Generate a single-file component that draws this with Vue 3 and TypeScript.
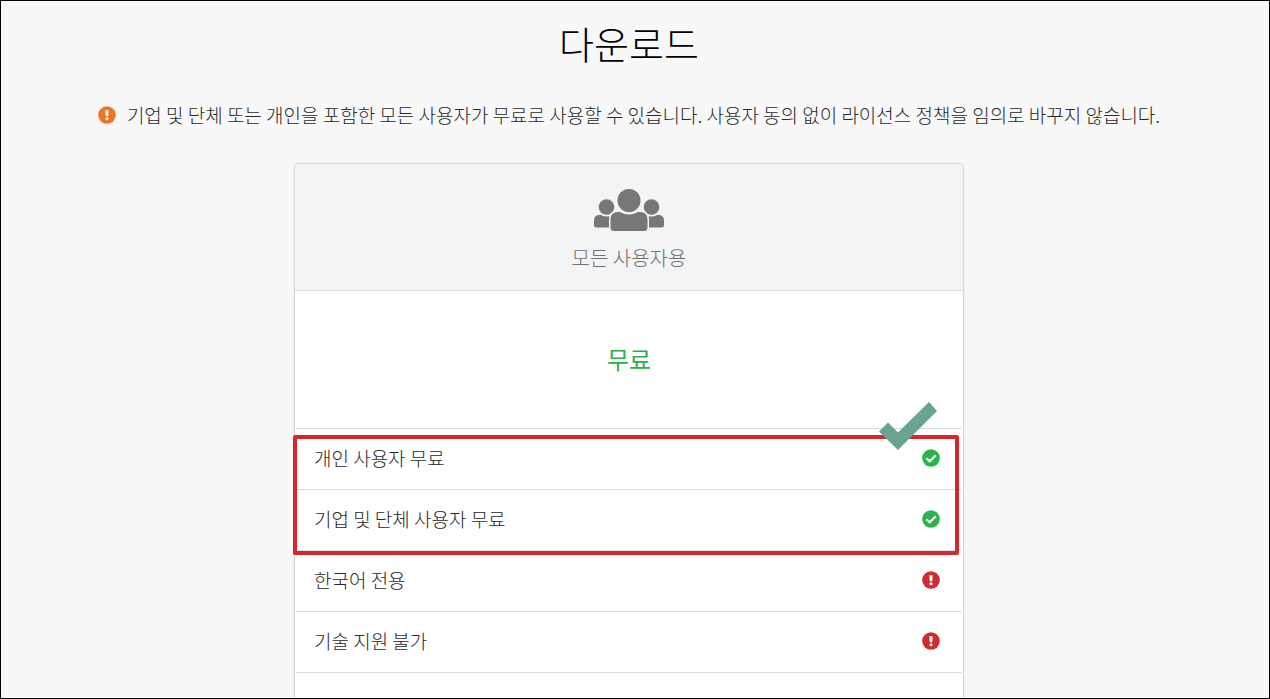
<script setup lang="ts">
interface Feature {
  label: string
  ok: boolean
}

const highlighted: Feature[] = [
  { label: '개인 사용자 무료', ok: true },
  { label: '기업 및 단체 사용자 무료', ok: true },
]
const others: Feature[] = [
  { label: '한국어 전용', ok: false },
  { label: '기술 지원 불가', ok: false },
]
const groups = [
  { marked: true, items: highlighted },
  { marked: false, items: others },
]
</script>

<template>
  <main class="page">
    <h1 class="title">다운로드</h1>
    <p class="notice">
      <svg class="badge orange" viewBox="0 0 18 18" aria-hidden="true">
        <circle cx="9" cy="9" r="8.8" fill="currentColor" />
        <path d="M7.3 4.2h3.4l-.5 6H7.8z" fill="#fff" />
        <circle cx="9" cy="12.8" r="1.5" fill="#fff" />
      </svg>
      <span>기업 및 단체 또는 개인을 포함한 모든 사용자가 무료로 사용할 수 있습니다. 사용자 동의 없이 라이선스 정책을 임의로 바꾸지 않습니다.</span>
    </p>

    <section class="card">
      <header class="head">
        <svg class="people" viewBox="0 0 70 42" aria-hidden="true">
          <g fill="#777">
            <circle cx="12.500" cy="18" r="7.800" />
            <circle cx="57.500" cy="18" r="7.800" />
            <path d="M0 31.500Q0 26 5.500 26H7q5.500 3.200 11 0H20V38.500H2.500Q0 38.500 0 36z" />
            <path d="M70 31.500Q70 26 64.500 26H63q-5.500 3.200-11 0H50V38.500H67.500Q70 38.500 70 36z" />
          </g>
          <path
            d="M16.500 30.500Q16.500 23 24 23H26q9 5 18 0h2Q53.500 23 53.500 30.500V38.500Q53.500 42 50 42H20Q16.500 42 16.500 38.500z"
            fill="#777" stroke="#f2f4f6" stroke-width="3" paint-order="stroke"
          />
          <circle cx="35" cy="11.500" r="11.500" fill="#777" />
        </svg>
        <h2 class="audience">모든 사용자용</h2>
      </header>
      <p class="price">무료</p>
      <div v-for="(group, i) in groups" :key="i" class="group">
        <ul class="list">
          <li v-for="item in group.items" :key="item.label" class="row">
            <span>{{ item.label }}</span>
            <svg v-if="item.ok" class="badge green" viewBox="0 0 18 18" aria-hidden="true">
              <circle cx="9" cy="9" r="8.8" fill="currentColor" />
              <path d="M4.300 9.200 7.700 12.300 13.800 6.200" fill="none" stroke="#fff" stroke-width="2.200" />
            </svg>
            <svg v-else class="badge red" viewBox="0 0 18 18" aria-hidden="true">
              <circle cx="9" cy="9" r="8.8" fill="currentColor" />
              <path d="M7.3 4.2h3.4l-.5 6H7.8z" fill="#fff" />
              <circle cx="9" cy="12.8" r="1.5" fill="#fff" />
            </svg>
          </li>
        </ul>
        <template v-if="group.marked">
          <div class="frame"></div>
          <svg class="tick" viewBox="0 0 58 48" aria-hidden="true">
            <path d="M0 29.500 9 20.500 19 30.500 50 0 58 9 19 48z" fill="#69a391" />
          </svg>
        </template>
      </div>
      <div class="rest"></div>
    </section>
  </main>
</template>

<style>
body {
  margin: 0;
}
</style>

<style scoped>
.page {
  box-sizing: border-box;
  height: 100vh;
  overflow: hidden;
  padding: 14px 12px 0 0;
  border: 1px solid #000;
  background: #f8f8f8;
  color: #282828;
  font-family: "Noto Sans CJK KR", sans-serif;
  font-weight: 300;
  font-size: 19px;
  line-height: 28px;
}
.title {
  margin: 0;
  color: #000;
  font-size: 38px;
  font-weight: 300;
  line-height: 56px;
  text-align: center;
}
.notice {
  display: flex;
  align-items: center;
  justify-content: center;
  gap: 11px;
  margin: 30px 0 34px;
}
.badge {
  flex: none;
  width: 18px;
  height: 18px;
}
.orange {
  color: #ed7525;
}
.green {
  color: #28b54b;
}
.red {
  color: #cd2d30;
}
.card {
  box-sizing: border-box;
  max-width: 670px;
  margin: 0 auto;
  border: 1px solid #d8d9db;
  border-radius: 5px;
  background: #fff;
  box-shadow: 0 0 2px #0002;
}
.head {
  display: flex;
  flex-direction: column;
  align-items: center;
  gap: 13px;
  padding: 25px 0 18px;
  border-bottom: 1px solid #dcdde0;
  border-radius: 4px 4px 0 0;
  background: #f2f4f6;
}
.people {
  width: 70px;
  height: 42px;
}
.audience {
  margin: 0;
  color: #707070;
  font-size: 20px;
  font-weight: 300;
  line-height: 28px;
}
.price {
  margin: 0 1px;
  padding: 50px 0 51px;
  border-bottom: 1px solid #ddd;
  color: #28b04b;
  font-size: 24px;
  font-weight: 400;
  line-height: 36px;
  text-align: center;
}
.group {
  position: relative;
}
.list {
  margin: 0 1px;
  padding: 0;
  list-style: none;
}
.row {
  display: flex;
  align-items: center;
  justify-content: space-between;
  padding: 15px 22px 17px 18px;
  border-bottom: 1px solid #ddd;
}
.frame {
  position: absolute;
  inset: 6px 4px -4px -2px;
  border: 4px solid #d9262e;
  border-radius: 2px;
}
.tick {
  position: absolute;
  top: -27px;
  right: 26px;
  width: 58px;
  height: 48px;
}
.rest {
  height: 61px;
}
</style>
